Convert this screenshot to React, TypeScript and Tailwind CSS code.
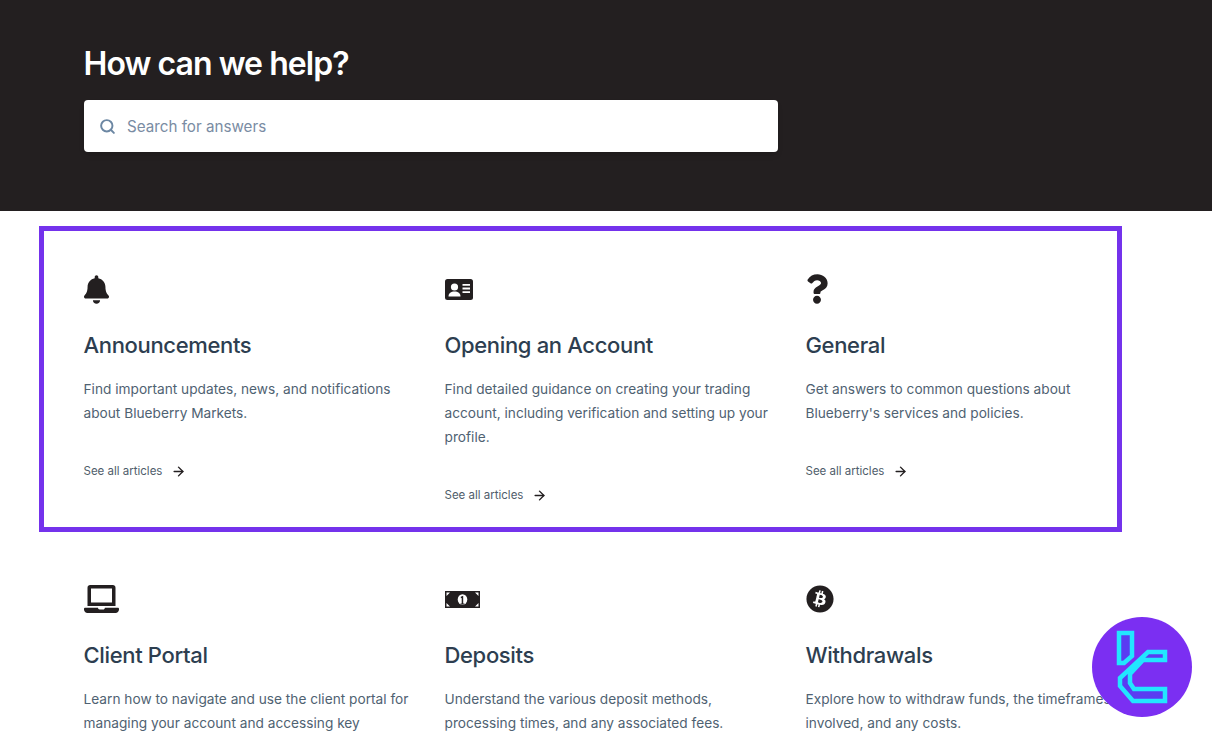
import React from 'react';
import { FaBell, FaQuestion, FaLaptop, FaBitcoin } from 'react-icons/fa';
import { Search, ArrowRight } from 'lucide-react';

interface Category {
  title: string;
  body: string;
  icon: React.ReactNode;
  showLink?: boolean;
}

// solid id card with a knocked out person and three lines
function IdCardIcon() {
  return (
    <svg viewBox="0 0 28 21" className="h-[21px] w-[28px]">
      <rect width="28" height="21" rx="2.5" fill="#231f20" />
      <circle cx="9.5" cy="8" r="3.6" fill="#fff" />
      <path d="M3.5 17.5c0-3.4 2.5-5 6-5s6 1.600 6 5z" fill="#fff" />
      <path d="M17.500 5h7.500v1.800h-7.500zM17.500 8.600h7.500v1.800h-7.500zM17.500 12.200h7.500v1.800h-7.500z" fill="#fff" />
    </svg>
  );
}

// dollar bill, white corner ticks and a round centre
function BillIcon() {
  return (
    <svg viewBox="0 0 35 17" className="h-[17px] w-[35px]">
      <rect width="35" height="17" fill="#231f20" />
      <path d="M1.500 1.500h3.500l-3.500 3.500zM33.500 1.500h-3.500l3.500 3.500zM1.500 15.500h3.500l-3.500-3.500zM33.500 15.500h-3.500l3.500-3.500z" fill="#fff" />
      <ellipse cx="17.500" cy="8.500" rx="4.800" ry="5.200" fill="#fff" />
      <path d="M15.800 5.800l2.400-1v7.600h1.300v1.100h-4v-1.100h1.200v-5.500l-.9.300z" fill="#231f20" />
    </svg>
  );
}

const categories: Category[] = [
  {
    title: 'Announcements',
    body: 'Find important updates, news, and notifications about Blueberry Markets.',
    icon: <FaBell className="h-[29px] w-[25px]" />,
    showLink: true,
  },
  {
    title: 'Opening an Account',
    body: 'Find detailed guidance on creating your trading account, including verification and setting up your profile.',
    icon: <IdCardIcon />,
    showLink: true,
  },
  {
    title: 'General',
    body: "Get answers to common questions about Blueberry's services and policies.",
    icon: <FaQuestion className="h-[30px] w-[22px]" />,
    showLink: true,
  },
  {
    title: 'Client Portal',
    body: 'Learn how to navigate and use the client portal for managing your account and accessing key',
    icon: <FaLaptop className="h-[28px] w-[35px]" />,
  },
  {
    title: 'Deposits',
    body: 'Understand the various deposit methods, processing times, and any associated fees.',
    icon: <BillIcon />,
  },
  {
    title: 'Withdrawals',
    body: 'Explore how to withdraw funds, the timeframes involved, and any costs.',
    icon: <FaBitcoin className="h-[28px] w-[28px]" />,
  },
];

function CategoryCard({ title, body, icon, showLink }: Category) {
  return (
    <div className="flex flex-col items-start">
      <div className="flex h-[30px] -translate-y-[1px] items-center text-[#231f20]">{icon}</div>
      <h2 className="mt-[24px] text-[22px] font-medium leading-[32px] tracking-[-0.34px] text-[#2d3e50]">{title}</h2>
      <p className="mt-[16px] text-[13.7px] leading-[24px] text-[#4f6272]">{body}</p>
      {showLink && (
        <a className="mt-[34px] flex items-center text-[11.5px] leading-[24px] text-[#4f5d6b]">
          See all articles
          <ArrowRight className="ml-[9px] h-[15px] w-[15px] text-[#231f20]" strokeWidth={2.25} />
        </a>
      )}
    </div>
  );
}

function Logo() {
  return (
    <svg viewBox="0 0 100 100" className="h-[100px] w-[100px]">
      <circle cx="50" cy="50" r="50" fill="#7b2ff2" />
      <g fill="#5a3cf2" stroke="#22e6ff" strokeWidth="4.5">
        <path d="M27 16H40V39L32 46H27Z" />
        <path d="M73 35H56L28 61V69L41 84H73V72H42L38 66V57L51 43H73Z" />
      </g>
    </svg>
  );
}

export default function App() {
  return (
    <div
      className="relative h-[737px] w-full overflow-hidden bg-white"
      style={{ fontFamily: 'Inter, "Liberation Sans", sans-serif' }}
    >
      <header className="h-[211px] bg-[#231f20] pl-[84px] pt-[44px]">
        <h1 className="-ml-[0.5px] text-[32px] font-semibold leading-[40px] tracking-[-0.95px] text-white">How can we help?</h1>
        <div className="mt-[16px] flex h-[52px] w-[694px] items-center rounded-[4px] bg-white pl-[15px] shadow-md">
          <Search className="h-[17px] w-[17px] text-[#6c87a3]" strokeWidth={2.75} />
          <span className="ml-[11px] pt-[2px] text-[15.2px] text-[#7a8ca3]">Search for answers</span>
        </div>
      </header>

      <main className="grid grid-cols-[335px_335px_335px] gap-x-[26px] pl-[83.5px] pt-[64px]">
        {categories.map((c) => (
          <div key={c.title} className="h-[310px]">
            <CategoryCard {...c} />
          </div>
        ))}
      </main>

      {/* highlight frame drawn over the first row */}
      <div className="pointer-events-none absolute left-[39px] top-[226px] h-[306px] w-[1083px] border-[5px] border-[#7432ec]" />

      <div className="absolute left-[1092px] top-[617px]">
        <Logo />
      </div>
    </div>
  );
}
